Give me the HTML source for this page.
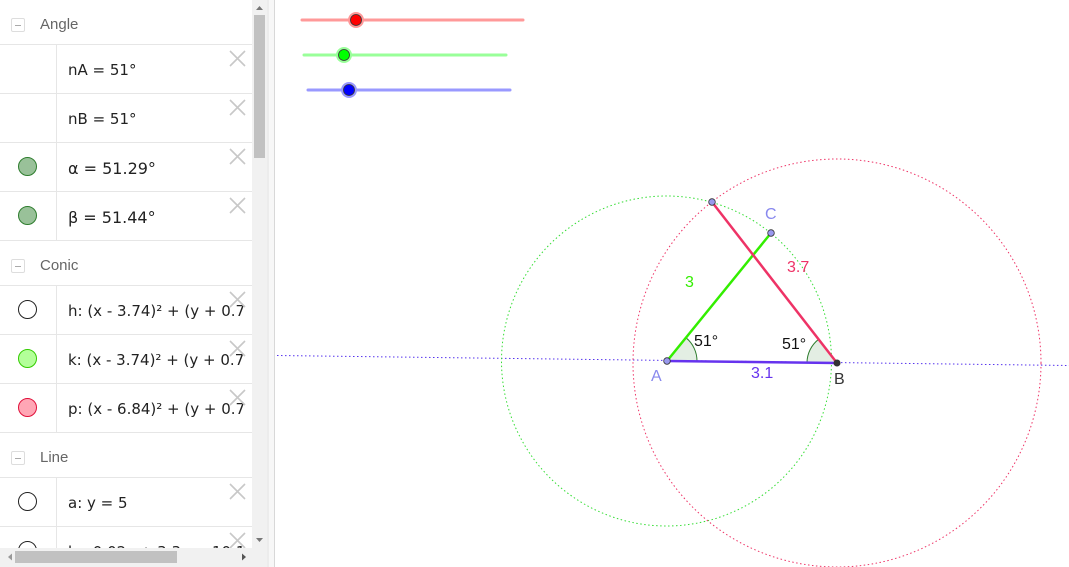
<!DOCTYPE html>
<html><head><meta charset="utf-8"><style>
body{margin:0;width:1069px;height:567px;overflow:hidden;background:#fff;font-family:"Liberation Sans","DejaVu Sans",sans-serif;position:relative}
.side{position:absolute;left:0;top:0;width:252px;height:548px;overflow:hidden}
.hdr{position:absolute;left:0;width:252px;height:44px;border-bottom:1px solid #e6e6e6}
.hdr .m{position:absolute;left:11px;top:18px;width:12px;height:12px;border:1px solid #ddd;border-radius:2px}
.hdr .m:after{content:"";position:absolute;left:3px;top:5.5px;width:6px;height:1px;background:#aaa}
.hdr span{position:absolute;left:40px;top:16px;font-size:15px;color:#666}
.row{position:absolute;left:0;width:252px;height:48px;border-bottom:1px solid #e6e6e6}
.row .l{position:absolute;left:56px;top:0;width:1px;height:48px;background:#e6e6e6}
.row .t{position:absolute;left:68px;top:16px;font-family:"DejaVu Sans",sans-serif;font-size:15px;color:#222;white-space:nowrap}
.row .c{position:absolute;left:18px;top:14px;width:19px;height:19px;border-radius:50%;box-sizing:border-box}
</style></head><body>
<div class="side">
<div class="hdr" style="top:0"><div class="m"></div><span>Angle</span></div>
<div class="row" style="top:45px"><div class="l"></div><div class="t">nA = 51°</div></div>
<div class="row" style="top:94px"><div class="l"></div><div class="t">nB = 51°</div></div>
<div class="row" style="top:143px"><div class="l"></div><div class="c" style="background:#99c199;border:1px solid #2e7d2e"></div><div class="t" style="font-size:16px">α = 51.29°</div></div>
<div class="row" style="top:192px"><div class="l"></div><div class="c" style="background:#99c199;border:1px solid #2e7d2e"></div><div class="t" style="font-size:16px">β = 51.44°</div></div>
<div class="hdr" style="top:241px"><div class="m"></div><span style="top:16px">Conic</span></div>
<div class="row" style="top:286px"><div class="l"></div><div class="c" style="border:1px solid #222"></div><div class="t">h: (x - 3.74)² + (y + 0.7</div></div>
<div class="row" style="top:335px"><div class="l"></div><div class="c" style="background:#b3ff99;border:1px solid #33cc00"></div><div class="t">k: (x - 3.74)² + (y + 0.7</div></div>
<div class="row" style="top:384px"><div class="l"></div><div class="c" style="background:#ffa6b5;border:1px solid #e0103a"></div><div class="t">p: (x - 6.84)² + (y + 0.7</div></div>
<div class="hdr" style="top:433px"><div class="m"></div><span style="top:16px">Line</span></div>
<div class="row" style="top:478px"><div class="l"></div><div class="c" style="border:1px solid #222"></div><div class="t">a: y = 5</div></div>
<div class="row" style="top:527px"><div class="l"></div><div class="c" style="border:1px solid #222"></div><div class="t">b: -0.02x + 3.3y = 10.1</div></div>
</div>
<svg style="position:absolute;left:0;top:0" width="1069" height="567">
<g stroke="#c8c8c8" stroke-width="1.6">
<path d="M230 51l15 15M245 51l-15 15"/><path d="M230 100l15 15M245 100l-15 15"/><path d="M230 149l15 15M245 149l-15 15"/><path d="M230 198l15 15M245 198l-15 15"/>
<path d="M230 292l15 15M245 292l-15 15"/><path d="M230 341l15 15M245 341l-15 15"/><path d="M230 390l15 15M245 390l-15 15"/><path d="M230 484l15 15M245 484l-15 15"/><path d="M230 533l15 15M245 533l-15 15"/>
</g>
<rect x="252" y="0" width="15" height="548" fill="#f1f1f1"/>
<rect x="254" y="15" width="11" height="143" fill="#c1c1c1"/>
<path d="M256 10l3.5-4 3.5 4z" fill="#777"/><path d="M256 538l3.5 4 3.5-4z" fill="#777"/>
<rect x="0" y="548" width="267" height="19" fill="#f1f1f1"/>
<rect x="15" y="551" width="162" height="12" fill="#c1c1c1"/>
<path d="M8 557l4-3.5v7z" fill="#999"/><path d="M246 557l-4-3.5v7z" fill="#555"/>
<rect x="267" y="0" width="7" height="567" fill="#f7f7f7"/>
<line x1="268" y1="0" x2="268" y2="567" stroke="#e0e0e0"/>
<line x1="274.5" y1="0" x2="274.5" y2="567" stroke="#d8d8d8"/>
<line x1="302" y1="20" x2="523" y2="20" stroke="#ff9999" stroke-width="3" stroke-linecap="round"/>
<circle cx="356" cy="20" r="8" fill="#ff9999"/><circle cx="356" cy="20" r="5.5" fill="#f00" stroke="#333" stroke-width="0.8"/>
<line x1="304" y1="55" x2="506" y2="55" stroke="#99ff99" stroke-width="3" stroke-linecap="round"/>
<circle cx="344" cy="55" r="8" fill="#99ff99"/><circle cx="344" cy="55" r="5.5" fill="#0f0" stroke="#333" stroke-width="0.8"/>
<line x1="308" y1="90" x2="510" y2="90" stroke="#9999ff" stroke-width="3" stroke-linecap="round"/>
<circle cx="349" cy="90" r="8" fill="#9999ff"/><circle cx="349" cy="90" r="5.5" fill="#00f" stroke="#333" stroke-width="0.8"/>
<line x1="277" y1="355.5" x2="1069" y2="365.5" stroke="#5533ee" stroke-width="1" stroke-dasharray="1.5 2.5"/>
<circle cx="666.5" cy="361" r="165" fill="none" stroke="#33dd33" stroke-width="1" stroke-dasharray="1.5 2.5"/>
<circle cx="837" cy="363" r="204" fill="none" stroke="#ee3366" stroke-width="1" stroke-dasharray="1.5 2.5"/>
<path d="M667 361L697 361.4A30 30 0 0 0 685.9 337.7Z" fill="#e3eee3" stroke="none"/>
<path d="M697 361.4A30 30 0 0 0 685.9 337.7" fill="none" stroke="#2e7d2e"/>
<path d="M837 363L807 362.6A30 30 0 0 1 818.6 339.3Z" fill="#e3eee3"/>
<path d="M807 362.6A30 30 0 0 1 818.6 339.3" fill="none" stroke="#2e7d2e"/>
<line x1="667" y1="361" x2="837" y2="363" stroke="#6633ee" stroke-width="2.5"/>
<line x1="667" y1="361" x2="771" y2="233" stroke="#33ee00" stroke-width="2.5"/>
<line x1="712" y1="202" x2="837" y2="363" stroke="#ee3366" stroke-width="2.5"/>
<circle cx="667" cy="361" r="3.3" fill="#9999ee" stroke="#333" stroke-width="0.8"/>
<circle cx="712" cy="202" r="3.3" fill="#9999ee" stroke="#333" stroke-width="0.8"/>
<circle cx="771" cy="233" r="3.3" fill="#9999ee" stroke="#333" stroke-width="0.8"/>
<circle cx="837" cy="363" r="3.5" fill="#333"/>
<g font-family="Liberation Sans, sans-serif" font-size="16">
<text x="651" y="381" fill="#8888ee">A</text>
<text x="834" y="384" fill="#333">B</text>
<text x="765" y="219" fill="#8888ee">C</text>
<text x="685" y="287" fill="#33ee00">3</text>
<text x="787" y="272" fill="#ee3366">3.7</text>
<text x="751" y="378" fill="#6633ee">3.1</text>
<text x="694" y="346" fill="#111">51°</text>
<text x="782" y="349" fill="#111">51°</text>
</g>
</svg>
</body></html>
